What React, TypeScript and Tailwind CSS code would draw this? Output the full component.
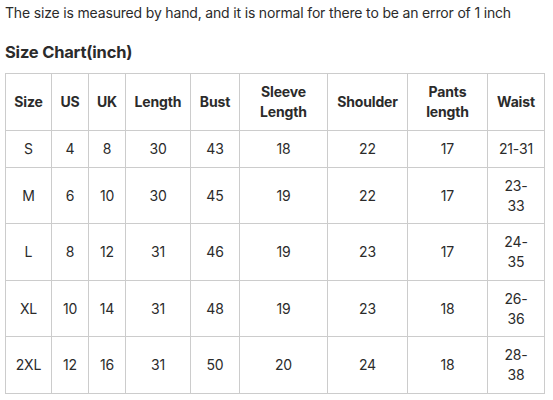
const rows: [string, string, string, string, string, string, string, string, string[]][] = [
  ["S", "4", "8", "30", "43", "18", "22", "17", ["21-31"]],
  ["M", "6", "10", "30", "45", "19", "22", "17", ["23-", "33"]],
  ["L", "8", "12", "31", "46", "19", "23", "17", ["24-", "35"]],
  ["XL", "10", "14", "31", "48", "19", "23", "18", ["26-", "36"]],
  ["2XL", "12", "16", "31", "50", "20", "24", "18", ["28-", "38"]],
];

const widths = ["w-[46px]", "w-[37px]", "w-[37px]", "w-[65px]", "w-[49px]", "w-[88px]", "w-[80px]", "w-[80px]", "w-[57px]"];

export default function App() {
  return (
    <div className="w-[553px] h-[400px] bg-white text-[#2b2b2b] font-['Inter',sans-serif] px-[5px] pt-[3px]">
      <p className="text-[14px] leading-5 tracking-[-0.17px]">The size is measured by hand, and it is normal for there to be an error of 1 inch</p>
      <h2 className="text-[16.5px] font-bold leading-6 tracking-[-0.2px] mt-[17px] mb-[9px]">Size Chart(inch)</h2>
      <table className="table-fixed border-collapse w-[539px] text-[14px] leading-[19.75px] tracking-[-0.15px] text-center">
        <colgroup>
          {widths.map((w, i) => (
            <col key={i} className={w} />
          ))}
        </colgroup>
        <thead>
          <tr className="font-semibold leading-5">
            <th className="border border-[#ccc] p-2">Size</th>
            <th className="border border-[#ccc] p-2">US</th>
            <th className="border border-[#ccc] p-2">UK</th>
            <th className="border border-[#ccc] p-2">Length</th>
            <th className="border border-[#ccc] p-2">Bust</th>
            <th className="border border-[#ccc] p-2">Sleeve<br />Length</th>
            <th className="border border-[#ccc] p-2">Shoulder</th>
            <th className="border border-[#ccc] p-2">Pants<br />length</th>
            <th className="border border-[#ccc] p-2">Waist</th>
          </tr>
        </thead>
        <tbody>
          {rows.map((r) => (
            <tr key={r[0]}>
              {r.slice(0, 8).map((c, i) => (
                <td key={i} className="border border-[#ccc] p-2">{c as string}</td>
              ))}
              <td className="border border-[#ccc] p-2">
                {r[8].map((t, i) => (
                  <span key={i}>
                    {i > 0 && <br />}
                    {t}
                  </span>
                ))}
              </td>
            </tr>
          ))}
        </tbody>
      </table>
    </div>
  );
}
